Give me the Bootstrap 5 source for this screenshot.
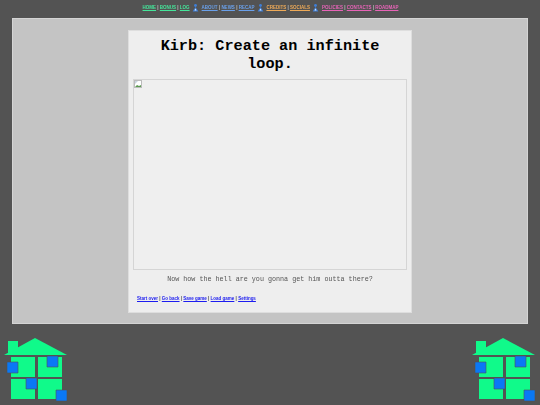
<!DOCTYPE html>
<html lang="en">
<head>
<meta charset="utf-8">
<title>Kirb</title>
<link href="https://cdn.jsdelivr.net/npm/bootstrap@5.3.0/dist/css/bootstrap.min.css" rel="stylesheet">
<style>
html,body{height:405px;overflow:hidden}
body{background:#535353;font-family:"Liberation Sans",Arial,sans-serif;width:540px;position:relative}
.topnav{height:18px;font-size:4.5px;font-weight:700;color:#c4c4c4;line-height:16px;padding-left:1px}
.topnav a{text-decoration:underline;text-decoration-thickness:.3px}
.blurred{filter:blur(.3px)}
.gn{color:#45e59a}.bl{color:#6aa0ea}.or{color:#eeaa58}.pk{color:#e864b8}
.ic{width:7px;height:8px;margin:-2px 2.5px 0}
.outerp{width:516px;height:306px;margin-left:12px;background:#c4c4c4;border:1px solid #d4d4d4;padding-top:11px}
.storyp{width:284px;height:283px;margin-left:115px;background:#eeeeee;border:1px solid #dedede;padding:0 4px}
.ttl{font-family:"Liberation Mono","Courier New",monospace;font-weight:700;font-size:15.2px;line-height:17.5px;color:#000;text-align:center;margin:7px 0 5px;height:36px;padding:0 20px}
.imgbox{height:191px;border:1px solid #d5d5d5;background:#efefef}
.cap{font-family:"Liberation Mono","Courier New",monospace;font-size:6.72px;line-height:9px;color:#555;text-align:center;margin:5px 0 11px}
.ftr{font-size:4.5px;font-weight:700;line-height:7px;color:#444;padding-left:4px}
.ftr a{color:#1c1cf0}
.hs{position:absolute;top:337px;width:64px;height:65px}
.hl{left:4px}.hr{left:472px}
</style>
</head>
<body>
<div class="topnav d-flex justify-content-center blurred">
<span><a class="gn" href="#">HOME</a> | <a class="gn" href="#">BONUS</a> | <a class="gn" href="#">LOG</a></span>
<svg class="ic align-self-center" viewBox="0 0 7 8"><circle cx="3.5" cy="1.5" r="1.4" fill="#3f7fd8"/><path d="M3.5 3L.6 7.5h5.8z" fill="#3f7fd8"/><path d="M3.5 4.5L2.5 6.5h2z" fill="#e6eefa"/></svg>
<span><a class="bl" href="#">ABOUT</a> | <a class="bl" href="#">NEWS</a> | <a class="bl" href="#">RECAP</a></span>
<svg class="ic align-self-center" viewBox="0 0 7 8"><circle cx="3.5" cy="1.5" r="1.4" fill="#3f7fd8"/><path d="M3.5 3L.6 7.5h5.8z" fill="#3f7fd8"/><path d="M3.5 4.5L2.5 6.5h2z" fill="#e6eefa"/></svg>
<span><a class="or" href="#">CREDITS</a> | <a class="or" href="#">SOCIALS</a></span>
<svg class="ic align-self-center" viewBox="0 0 7 8"><circle cx="3.5" cy="1.5" r="1.4" fill="#3f7fd8"/><path d="M3.5 3L.6 7.5h5.8z" fill="#3f7fd8"/><path d="M3.5 4.5L2.5 6.5h2z" fill="#e6eefa"/></svg>
<span><a class="pk" href="#">POLICIES</a> | <a class="pk" href="#">CONTACTS</a> | <a class="pk" href="#">ROADMAP</a></span>
</div>
<div class="outerp">
<div class="storyp">
<h1 class="ttl">Kirb: Create an infinite loop.</h1>
<div class="imgbox"><svg width="8" height="8" viewBox="0 0 8 8" class="d-block blurred"><rect x=".5" y=".5" width="7" height="7" fill="#fff" stroke="#bbb"/><path d="M1 7l2-2 2 1 2-1v2z" fill="#5a9a50"/><path d="M1 1h3L1 4z" fill="#c8d4e0"/></svg></div>
<p class="cap blurred">Now how the hell are you gonna get him outta there?</p>
<div class="ftr blurred"><a href="#">Start over</a> | <a href="#">Go back</a> | <a href="#">Save game</a> | <a href="#">Load game</a> | <a href="#">Settings</a></div>
</div>
</div>
<svg class="hs hl" viewBox="0 0 64 65"><use href="#house"/></svg>
<svg class="hs hr" viewBox="0 0 64 65"><defs><g id="house"><path d="M0 18L31 1 63 18H0z" fill="#10fa8a"/><path d="M4 4h10v14H4z" fill="#10fa8a"/><path d="M7 20h24v20H7zM34 20h24v20H34zM7 42h24v20H7zM34 42h24v20H34z" fill="#10fa8a"/><g fill="#0a78f5" stroke="#535353" stroke-width=".6"><path d="M3 25h11v11H3zM43 19h11v11H43zM22 41h11v11H22zM52 53h11v11H52z"/></g></g></defs><use href="#house"/></svg>
</body>
</html>
